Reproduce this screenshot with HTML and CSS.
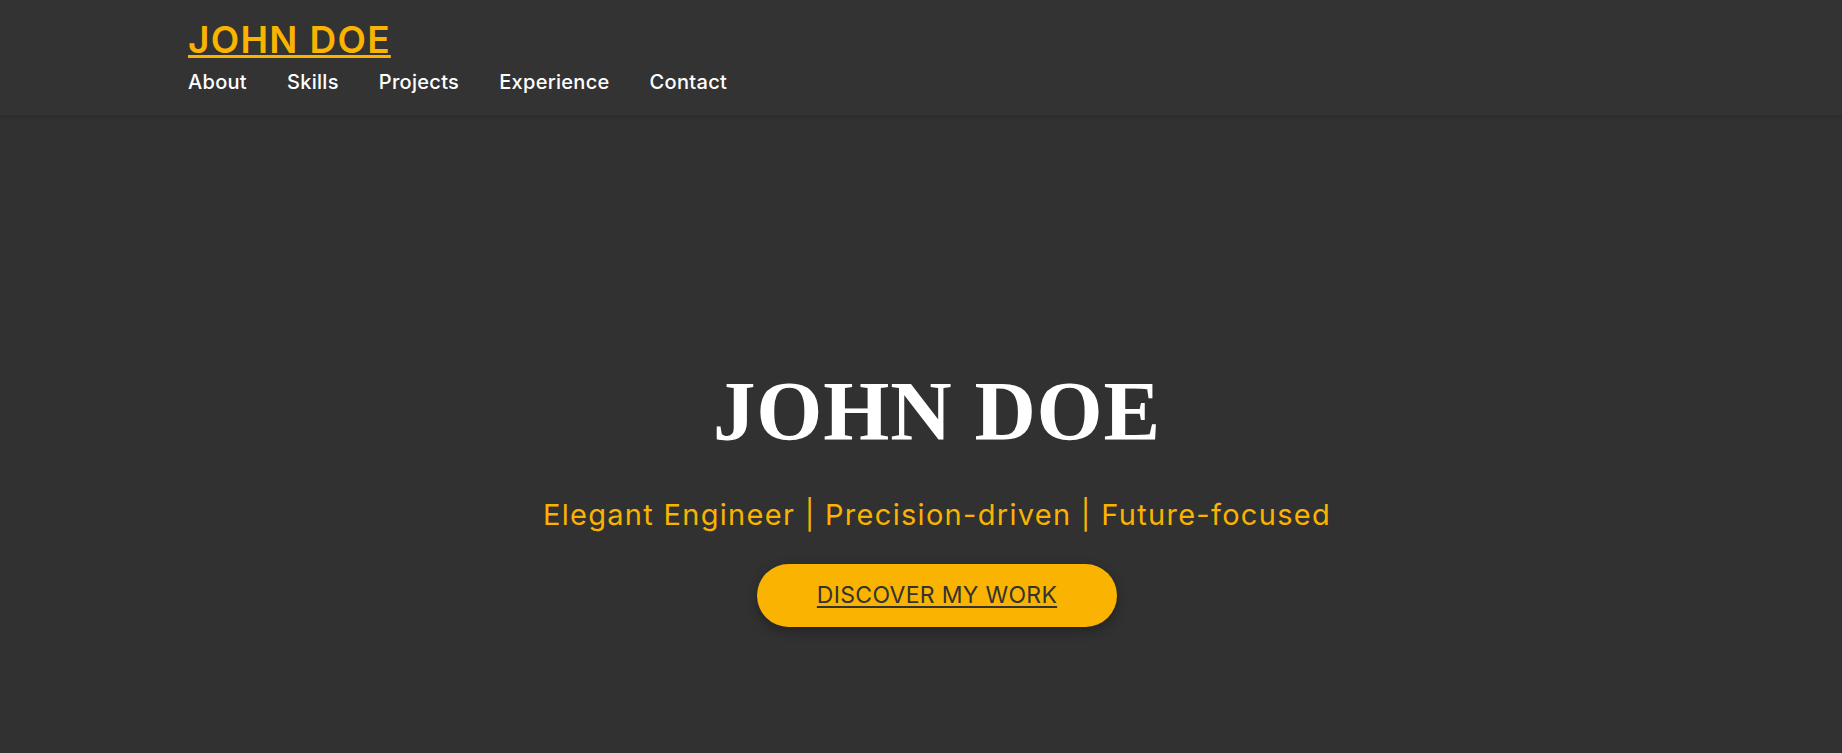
FILE: index.html
```html
<!DOCTYPE html>
<html lang="en">
<head>
<meta charset="utf-8">
<title>John Doe</title>
<link rel="stylesheet" href="styles.css">
</head>
<body>
<header class="site-header">
  <div class="header-inner">
    <a class="logo" href="#">JOHN DOE</a>
    <nav class="main-nav">
      <a href="#about">About</a>
      <a href="#skills">Skills</a>
      <a href="#projects">Projects</a>
      <a href="#experience">Experience</a>
      <a href="#contact">Contact</a>
    </nav>
  </div>
</header>
<main class="hero">
  <h1 class="hero-title">JOHN DOE</h1>
  <p class="hero-subtitle">Elegant Engineer | Precision-driven | Future-focused</p>
  <a class="hero-btn" href="#projects">DISCOVER MY WORK</a>
</main>
</body>
</html>
```
FILE: styles.css
```css
html, body {
  margin: 0;
  padding: 0;
}
body {
  background: #313131;
  font-family: Inter, "Noto Sans", sans-serif;
  height: 753px;
  overflow: hidden;
}
.site-header {
  background: #333333;
  border-bottom: 1px solid #2d2d2d;
  box-shadow: 0 1px 3px rgba(0,0,0,0.12);
}
.header-inner {
  width: 1466px;
  margin: 0 auto;
  padding: 17px 0 18px;
  display: flex;
  flex-direction: column;
  align-items: flex-start;
}
.logo {
  font-size: 37px;
  line-height: 45px;
  font-weight: 600;
  color: #f9b300;
  letter-spacing: 1.3px;
  text-decoration: underline;
  text-decoration-thickness: 3px;
  text-underline-offset: 2px;
}
.main-nav {
  display: flex;
  gap: 40px;
  margin-top: 6px;
}
.main-nav a {
  font-size: 20px;
  line-height: 29px;
  font-weight: 500;
  letter-spacing: 0.3px;
  color: #ffffff;
  text-decoration: none;
}
.hero {
  display: flex;
  flex-direction: column;
  align-items: center;
  text-align: center;
  padding: 244px 0 0 32px;
}
.hero-title {
  margin: 0;
  font-family: "Liberation Serif", "Times New Roman", serif;
  font-weight: 700;
  font-size: 85px;
  line-height: 102px;
  color: #ffffff;
  letter-spacing: 0.8px;
}
.hero-subtitle {
  margin: 33px 0 0;
  font-size: 29px;
  line-height: 40.6px;
  letter-spacing: 1.3px;
  color: #f9b300;
}
.hero-btn {
  margin-top: 28px;
  display: inline-block;
  padding: 18px 60px;
  font-size: 23px;
  line-height: 27.6px;
  letter-spacing: 0.3px;
  color: #333333;
  background: #f9b300;
  border-radius: 40px;
  text-decoration: underline;
  text-decoration-thickness: 2px;
  text-underline-offset: 3px;
  box-shadow: 0 4px 12px rgba(0,0,0,0.3);
}
```
